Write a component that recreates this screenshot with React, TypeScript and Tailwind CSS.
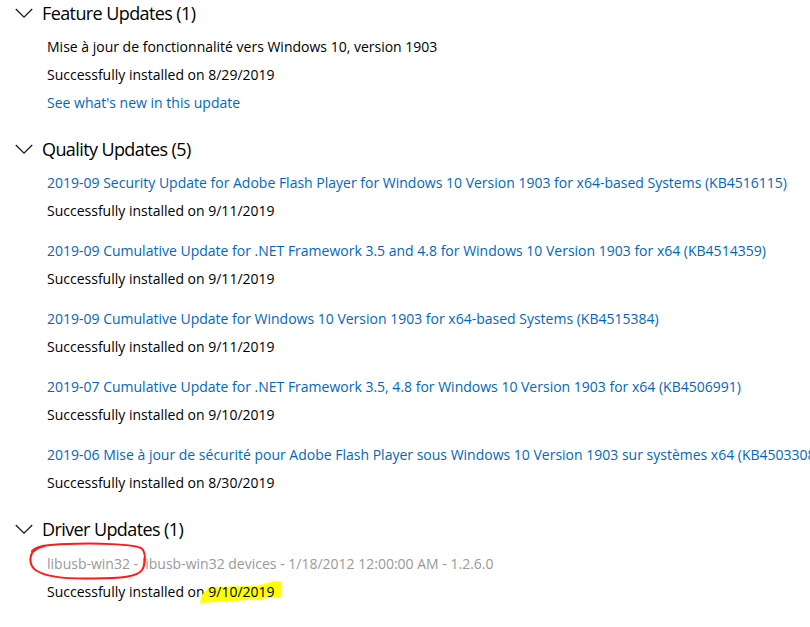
import React from "react";

const Chevron = () => (
  <svg width="18" height="11" viewBox="0 0 18 11" className="shrink-0">
    <path d="M0.8 1 L9 9.2 L17.2 1" fill="none" stroke="#1a1a1a" strokeWidth="1.3" />
  </svg>
);

const Header = ({ title }: { title: string }) => (
  <div className="flex h-[26px] items-center pl-[15px]">
    <Chevron />
    <span className="ml-[9px] text-[18px] leading-[26px] tracking-[-0.6px] text-black">{title}</span>
  </div>
);

const Row = ({ children, className = "" }: { children: React.ReactNode; className?: string }) => (
  <div className={`h-[28px] whitespace-nowrap pl-[47px] text-[14px] leading-[28px] ${className}`}>{children}</div>
);

const quality = [
  ["2019-09 Security Update for Adobe Flash Player for Windows 10 Version 1903 for x64-based Systems (KB4516115)", "9/11/2019"],
  ["2019-09 Cumulative Update for .NET Framework 3.5 and 4.8 for Windows 10 Version 1903 for x64 (KB4514359)", "9/11/2019"],
  ["2019-09 Cumulative Update for Windows 10 Version 1903 for x64-based Systems (KB4515384)", "9/11/2019"],
  ["2019-07 Cumulative Update for .NET Framework 3.5, 4.8 for Windows 10 Version 1903 for x64 (KB4506991)", "9/10/2019"],
  ["2019-06 Mise à jour de sécurité pour Adobe Flash Player sous Windows 10 Version 1903 sur systèmes x64 (KB4503308)", "8/30/2019"],
];

export default function App() {
  return (
    <div
      className="h-[627px] w-[810px] overflow-hidden bg-white text-black"
      style={{ fontFamily: '"Open Sans", "Noto Sans", sans-serif' }}
    >
      <section>
        <Header title="Feature Updates (1)" />
        <div className="mt-[7px]">
          <Row>Mise à jour de fonctionnalité vers Windows 10, version 1903</Row>
          <Row>Successfully installed on 8/29/2019</Row>
          <Row className="text-[#0067c0]">See what's new in this update</Row>
        </div>
      </section>

      <section className="mt-[19px]">
        <Header title="Quality Updates (5)" />
        <div className="mt-[7px] flex flex-col gap-[12px]">
          {quality.map(([t, d]) => (
            <div key={t}>
              <Row className="text-[#0067c0]">{t}</Row>
              <Row>Successfully installed on {d}</Row>
            </div>
          ))}
        </div>
      </section>

      <section className="mt-[19px]">
        <Header title="Driver Updates (1)" />
        <div className="mt-[8px]">
          <Row className="relative text-[#999999]">
            libusb-win32 - libusb-win32 devices - 1/18/2012 12:00:00 AM - 1.2.6.0
            <svg
              className="pointer-events-none absolute left-[27px] top-[-8px]"
              width="125"
              height="44"
              viewBox="0 0 125 44"
            >
              <path
                d="M5 9 C 10 4, 20 2.5, 40 2 C 70 1, 105 2, 114 6 C 119 9, 119 22, 115 28 C 110 35, 95 36, 65 36.5 C 40 37, 20 35, 10 29 C 3 25, 2 17, 5 11 C 8 7, 13 5, 18 4"
                fill="none"
                stroke="#ff1a1a"
                strokeWidth="2"
                strokeLinecap="round"
              />
            </svg>
          </Row>
          <Row>
            Successfully installed on{" "}
            <span className="relative inline-block">
              <svg
                className="pointer-events-none absolute left-[-8px] top-[3px]"
                width="84"
                height="24"
                viewBox="0 0 84 24"
              >
                <polygon points="9,6 58,5 74,0 82,1 81,16 48,19 0,22 2,14" fill="#ffff00" />
              </svg>
              <span className="relative">9/10/2019</span>
            </span>
          </Row>
        </div>
      </section>
    </div>
  );
}
